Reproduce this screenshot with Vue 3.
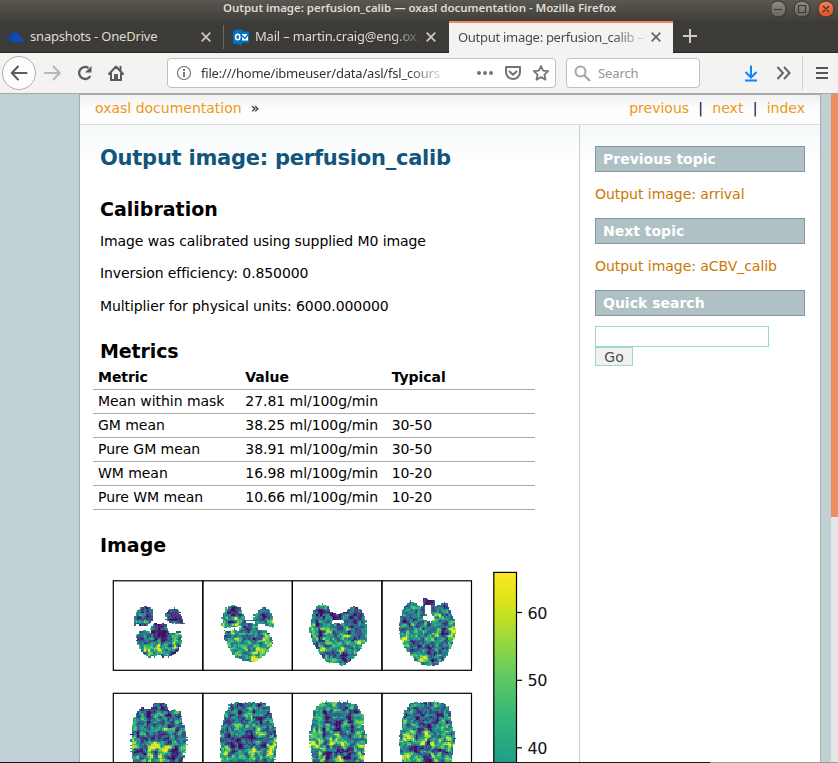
<script setup>
const rows = [
  ['Mean within mask', '27.81 ml/100g/min', ''],
  ['GM mean', '38.25 ml/100g/min', '30-50'],
  ['Pure GM mean', '38.91 ml/100g/min', '30-50'],
  ['WM mean', '16.98 ml/100g/min', '10-20'],
  ['Pure WM mean', '10.66 ml/100g/min', '10-20'],
]

const stops = [
  [68, 1, 84], [72, 40, 120], [62, 74, 137], [49, 104, 142], [38, 130, 142],
  [31, 158, 137], [53, 183, 121], [109, 205, 89], [180, 222, 44], [253, 231, 37],
]
const LEVELS = 20
const viridis = (t) => {
  const p = Math.min(0.9999, Math.max(0, t)) * (stops.length - 1)
  const i = Math.floor(p)
  const f = p - i
  return 'rgb(' + stops[i].map((c, k) => Math.round(c + (stops[i + 1][k] - c) * f)).join(',') + ')'
}

// Outlines are in panel units (268 to a side); blobs are [x, y, rx, ry, value].
const slices = [
  {
    x: 113.3, y: 580.8, base: 0.48,
    shapes: [
      '61,131 62,113 68,92 80,79 96,76 112,79 118,94 118,115 105,130 88,135 73,129',
      '153,108 165,87 178,83 182,78 186,82 196,86 203,106 211,118 211,132 195,130 175,128 163,120',
      '125,123 132,130 145,131 150,123 157,131 164,153 175,158 195,147 205,168 203,193 190,213 170,228 150,228 135,221 125,228 105,230 85,213 72,193 68,168 78,153 93,147 110,152 113,133',
    ],
    holes: [],
    blobs: [[95, 98, 26, 29, 0.2], [183, 104, 32, 30, 0.08], [138, 161, 28, 33, 0], [195, 207, 14, 18, 0.06], [135, 197, 6, 16, 1.2], [182, 196, 6, 13, 1.1], [192, 168, 8, 11, 0.95], [101, 210, 8, 7, 1.1], [66, 117, 6, 7, 0.65]],
  },
  {
    x: 203, y: 580.8, base: 0.6,
    shapes: [
      '56,136 58,113 63,93 76,75 93,71 111,81 123,103 128,120 116,133 96,138 66,143',
      '148,113 166,88 183,80 199,86 209,108 214,142 196,137 176,130 158,133',
      '119,118 148,118 151,127 163,132 165,145 171,147 191,148 206,173 208,188 196,208 181,228 161,238 155,243 141,241 116,238 91,223 76,198 64,168 64,148 76,153 91,145 106,148 115,131',
    ],
    holes: ['129,121 147,121 147,124 129,124'],
    blobs: [[92, 97, 26, 31, 0.16], [183, 105, 26, 28, 0.18], [138, 143, 22, 26, 0.2], [62, 119, 6, 10, 0.95], [211, 121, 5, 14, 1], [101, 119, 10, 10, 0.8], [71, 163, 8, 10, 0.25], [156, 235, 9, 8, 1.15], [101, 206, 12, 9, 0.9], [175, 205, 8, 10, 0.85]],
  },
  {
    x: 292.4, y: 580.8, base: 0.46,
    shapes: ['50,148 58,103 73,75 93,68 108,78 123,96 143,100 163,88 183,75 203,83 218,108 223,143 221,178 203,208 183,233 150,255 128,245 113,251 96,238 73,208 58,178'],
    holes: ['113,125 123,119 148,117 156,124 145,129 135,124 120,130'],
    blobs: [[137, 107, 27, 13, 0.02], [91, 110, 24, 24, 0.15], [184, 110, 22, 25, 0.15], [108, 163, 15, 35, 0.64], [156, 168, 15, 35, 0.64], [183, 160, 12, 32, 0.16], [84, 170, 12, 40, 0.22], [58, 155, 7, 12, 0.95], [91, 206, 8, 9, 1.2], [158, 229, 15, 14, 0], [206, 182, 12, 12, 0.85], [149, 207, 7, 11, 1.1], [117, 236, 10, 7, 1.1]],
  },
  {
    x: 382, y: 580.8, base: 0.48,
    shapes: ['51,143 53,118 61,93 70,74 86,60 103,68 116,82 122,76 121,51 133,48 137,56 158,60 160,75 188,65 198,73 200,88 214,108 221,143 218,168 208,198 193,228 168,250 143,256 118,250 88,228 68,198 53,168'],
    holes: ['128,71 145,71 145,100 155,105 153,118 145,125 126,116 120,106 132,103'],
    blobs: [[140, 63, 20, 15, 0.04], [83, 139, 12, 48, 0.12], [188, 150, 15, 46, 0.1], [65, 177, 11, 18, 1.15], [211, 147, 9, 19, 1.15], [96, 225, 13, 9, 1.15], [55, 120, 7, 10, 0.85], [113, 151, 14, 24, 0.6], [155, 151, 14, 24, 0.65], [145, 217, 12, 25, 0.04], [122, 232, 15, 7, 1.1], [203, 194, 10, 12, 0.95], [101, 195, 12, 15, 0.15], [175, 101, 13, 22, 0.65]],
  },
  {
    x: 113.3, y: 693.3, base: 0.42,
    shapes: ['52,125 55,95 63,70 75,50 90,42 110,47 120,30 155,30 165,53 182,47 200,55 207,90 217,115 220,155 210,190 203,268 68,268 52,170'],
    holes: [],
    blobs: [[138, 36, 18, 9, 0.04], [139, 72, 14, 31, 0.42], [108, 80, 10, 34, 0.16], [168, 81, 10, 34, 0.16], [112, 107, 32, 6, 0.72], [165, 107, 28, 6, 0.72], [138, 133, 25, 12, 0.26], [88, 168, 17, 16, 0], [187, 181, 20, 20, 0], [119, 161, 19, 9, 1.05], [158, 164, 17, 10, 1], [64, 151, 8, 15, 0.9], [208, 163, 9, 15, 1], [109, 192, 8, 17, 1], [145, 190, 7, 22, 0.95], [189, 63, 10, 11, 0.75], [72, 70, 9, 16, 0.5]],
  },
  {
    x: 203, y: 693.3, base: 0.42,
    shapes: ['51,135 53,105 66,65 79,35 96,27 126,28 128,21 131,28 181,28 201,40 206,75 219,115 221,160 206,268 61,268 51,175'],
    holes: [],
    blobs: [[137, 61, 14, 29, 0.65], [111, 64, 11, 32, 0.12], [167, 67, 11, 32, 0.12], [100, 108, 9, 32, 0.68], [173, 110, 9, 32, 0.76], [138, 128, 15, 31, 0.25], [119, 98, 15, 6, 0.68], [154, 98, 15, 6, 0.68], [91, 155, 21, 22, 0.04], [184, 151, 14, 19, 0.06], [65, 177, 10, 22, 0.85], [207, 164, 13, 23, 1.1], [113, 178, 13, 13, 0.8], [152, 181, 10, 16, 1], [136, 205, 6, 20, 0.9], [77, 66, 11, 25, 0.25]],
  },
  {
    x: 292.4, y: 693.3, base: 0.54,
    shapes: ['50,135 56,95 63,55 83,30 100,24 108,22 120,28 138,22 150,26 166,22 168,26 193,35 206,60 215,65 213,95 221,135 215,175 206,268 68,268 55,175'],
    holes: [],
    blobs: [[104, 66, 20, 17, 0.06], [172, 67, 20, 18, 0.06], [138, 94, 11, 22, 0], [137, 52, 9, 20, 0.5], [73, 111, 12, 25, 0.68], [204, 111, 10, 25, 0.65], [101, 119, 8, 32, 0.2], [175, 119, 8, 32, 0.2], [137, 134, 11, 12, 1.1], [120, 151, 12, 7, 0.95], [156, 151, 12, 7, 1], [104, 188, 18, 20, 0.04], [170, 188, 19, 20, 0.04], [66, 154, 14, 9, 0.9], [205, 156, 12, 11, 0.9], [137, 175, 15, 14, 0.06], [85, 178, 6, 28, 0.8], [138, 200, 8, 12, 1]],
  },
  {
    x: 382, y: 693.3, base: 0.52,
    shapes: ['51,145 58,95 66,55 86,30 108,24 110,27 138,27 163,23 186,30 203,45 208,85 220,135 213,180 198,268 70,268 56,185'],
    holes: [],
    blobs: [[104, 69, 21, 19, 0.06], [170, 68, 21, 19, 0.06], [137, 103, 14, 20, -0.04], [111, 113, 8, 32, 0.2], [163, 113, 8, 32, 0.2], [96, 109, 6, 28, 0.68], [180, 109, 7, 28, 0.68], [136, 130, 8, 12, 1.1], [124, 149, 8, 13, 1.05], [149, 149, 8, 13, 1.05], [137, 151, 5, 10, 0], [96, 168, 35, 8, 0], [175, 171, 32, 8, 0], [135, 176, 14, 7, 1.05], [133, 193, 12, 12, 0], [74, 135, 12, 16, 0.82], [197, 147, 13, 18, 0.88], [155, 194, 7, 12, 0.95], [77, 190, 13, 15, 0.8]],
  },
]

const hash = (x, y, s) => {
  let h = Math.imul(x + 101, 374761393) ^ Math.imul(y + 57, 668265263) ^ Math.imul(s + 13, 1442695041)
  h = Math.imul(h ^ (h >>> 13), 1274126177)
  h ^= h >>> 16
  return (h >>> 0) / 4294967295
}
const smooth = (x, y, s) => {
  const i = Math.floor(x)
  const j = Math.floor(y)
  const u = x - i
  const v = y - j
  const top = hash(i, j, s) * (1 - u) + hash(i + 1, j, s) * u
  const bottom = hash(i, j + 1, s) * (1 - u) + hash(i + 1, j + 1, s) * u
  return top * (1 - v) + bottom * v
}
const parse = (s) => s.split(' ').map((p) => p.split(',').map(Number))
const inside = (x, y, poly) => {
  let hit = false
  for (let i = 0, j = poly.length - 1; i < poly.length; j = i++) {
    const [xi, yi] = poly[i]
    const [xj, yj] = poly[j]
    if (yi > y !== yj > y && x < ((xj - xi) * (y - yi)) / (yj - yi) + xi) hit = !hit
  }
  return hit
}

const panels = slices.map((slice, n) => {
  const shapes = slice.shapes.map(parse)
  const holes = slice.holes.map(parse)
  const paths = Array.from({ length: LEVELS }, () => '')
  const cell = 268 / 64
  for (let j = 0; j < 64; j++) {
    for (let i = 0; i < 64; i++) {
      const x = (i + 0.5) * cell
      const y = (j + 0.5) * cell
      const ex = x + (hash(i, j, n + 31) - 0.5) * 4
      const ey = y + (hash(i, j, n + 47) - 0.5) * 4
      if (!shapes.some((s) => inside(ex, ey, s)) || holes.some((s) => inside(x, y, s))) continue
      // The sampling point is warped so that regions get irregular borders.
      const wx = x + (smooth(i / 2.6, j / 2.6, n + 120) - 0.5) * 16
      const wy = y + (smooth(i / 2.6, j / 2.6, n + 140) - 0.5) * 16
      let v = slice.base
      for (const [cx, cy, rx, ry, value] of slice.blobs) {
        const d = ((wx - cx) / rx) ** 2 + ((wy - cy) / ry) ** 2
        v += (value - v) * Math.exp(-d * 0.9) * 0.92
      }
      const noise = (smooth(i / 1.7, j / 1.7, n) - 0.5) * 0.85 + (hash(i, j, n + 80) - 0.5) * 0.22
      v += noise * (v < 0.15 ? 0.35 : 1)
      const level = Math.max(0, Math.min(LEVELS - 1, Math.floor(v * LEVELS)))
      paths[level] += `M${i} ${j}h1v1h-1z`
    }
  }
  return { x: slice.x, y: slice.y, paths: paths.map((d, k) => ({ d, fill: viridis((k + 0.5) / LEVELS) })).filter((p) => p.d) }
})

const ticks = [[60, 612.5], [50, 680.3], [40, 747.8]]
const frames = [113.3, 202.8, 292.4, 382]
</script>

<template>
  <div class="window">
    <header class="titlebar">
      <span class="title">Output image: perfusion_calib — oxasl documentation - Mozilla Firefox</span>
      <svg class="controls" width="66" height="21" viewBox="772 0 66 21">
        <defs>
          <linearGradient id="gray" x1="0" y1="0" x2="0" y2="1"><stop offset="0" stop-color="#8d8b84" /><stop offset="1" stop-color="#65645e" /></linearGradient>
          <linearGradient id="red" x1="0" y1="0" x2="0" y2="1"><stop offset="0" stop-color="#f37f58" /><stop offset="1" stop-color="#e2501f" /></linearGradient>
        </defs>
        <g stroke="#34332e" stroke-width="1">
          <circle cx="778" cy="9" r="8" fill="url(#gray)" /><circle cx="802" cy="9" r="8" fill="url(#gray)" /><circle cx="826" cy="9" r="8" fill="url(#red)" />
        </g>
        <path d="M774 9.5h8M798.5 5.5h7v7h-7zM823 6l6 6m0-6l-6 6" fill="none" stroke="#373630" stroke-width="1.2" />
      </svg>
    </header>

    <nav class="tabs">
      <div class="tab tab-one">
        <svg width="18" height="12" viewBox="0 0 18 12"><path d="M1 10.500Q-1 6 3 5Q4 1 8 1Q11 0 12 3L9 4Q6 4 5 7Q2 8 3 11Z" fill="#0b46b0" /><path d="M5 11Q2.500 8 6 7Q7 3.500 10 4Q12 3 14 7Q17 7 17 10Q17 11 15.500 11Z" fill="#0b4dbb" /></svg>
        <span class="label one">snapshots - OneDrive</span>
        <svg class="close" width="10" height="10" viewBox="0 0 10 10"><path d="M.7.7l8.600 8.600m0-8.600L.7 9.300" /></svg>
      </div>
      <div class="tab tab-two">
        <svg width="16" height="16" viewBox="0 0 16 16"><path d="M8 2.500h8v11H8z" fill="#0072c6" /><path d="M9 5h6v6.500H9z" fill="#fff" /><path d="M9 6.500l3 3L15.500 5" fill="none" stroke="#0072c6" stroke-width="1.400" /><path d="M0 1.600L9 0v16L0 14.400z" fill="#0072c6" /><ellipse cx="4.700" cy="8" rx="2.100" ry="2.800" fill="none" stroke="#fff" stroke-width="1.600" /></svg>
        <span class="label two">Mail – martin.craig@eng.ox.</span>
        <svg class="close" width="10" height="10" viewBox="0 0 10 10"><path d="M.7.7l8.600 8.600m0-8.600L.7 9.300" /></svg>
      </div>
      <div class="tab active">
        <span class="label three">Output image: perfusion_calib –</span>
        <svg class="close dark" width="10" height="10" viewBox="0 0 10 10"><path d="M.7.7l8.600 8.600m0-8.600L.7 9.300" /></svg>
      </div>
      <svg class="plus" width="14" height="14" viewBox="0 0 14 14"><path d="M7 0v14M0 7h14" /></svg>
    </nav>

    <div class="toolbar">
      <svg class="nav-icons" width="130" height="38" viewBox="0 54 130 38" fill="none" stroke="#5b5b5b" stroke-width="2" stroke-linejoin="round">
        <circle cx="19" cy="73" r="16.500" fill="#fdfdfd" stroke="#b0aeab" stroke-width="1" />
        <path d="M12 73h14.500M18 66.500L11.800 73l6.200 6.500" stroke-linecap="round" />
        <path d="M45 73h14.500M53.500 66.500l6.200 6.500-6.200 6.500" stroke="#b8b7b5" stroke-linecap="round" />
        <path d="M90.300 76A6 6 0 1 1 88.500 68" stroke-width="2.300" /><path d="M91.500 66v6.500H85z" fill="#5b5b5b" stroke="none" />
        <path d="M109 74l7-7.500 7 7.500M111 73v7h10v-7" stroke-linecap="round" /><path d="M114.500 80.500v-6h3v6" fill="#5b5b5b" stroke-width="1" /><path d="M120.500 66v5" />
      </svg>
      <div class="url">
        <svg width="16" height="16" viewBox="0 0 16 16"><circle cx="8" cy="8" r="6.500" fill="none" stroke="#777" stroke-width="1.200" /><path d="M7 7h2v5H7zM7 4h2v2H7z" fill="#777" /></svg>
        <span class="address">file:///home/ibmeuser/data/asl/fsl_cours</span>
        <svg class="url-icons" width="76" height="20" viewBox="475 63 76 20" fill="none" stroke="#747474" stroke-width="2" stroke-linejoin="round">
          <g fill="#747474" stroke="none"><circle cx="479" cy="73" r="2" /><circle cx="485" cy="73" r="2" /><circle cx="491" cy="73" r="2" /></g>
          <path d="M506 67h14v5a7 7 0 0 1-14 0z" /><path d="M509.500 71.500l3.500 3.200 3.500-3.200" stroke-linecap="round" />
          <path d="M541 66l2.100 4.700 5.100.5-3.800 3.400 1.100 5.100-4.500-2.600-4.500 2.600 1.100-5.100-3.800-3.400 5.100-.5z" stroke-width="1.800" />
        </svg>
      </div>
      <div class="search">
        <svg width="17" height="17" viewBox="0 0 17 17" fill="none" stroke="#a6a6a6" stroke-width="2"><circle cx="6.500" cy="6.500" r="5" /><path d="M10 10l6 6" stroke-width="2.400" /></svg>
        <span>Search</span>
      </div>
      <svg class="tools" width="94" height="36" viewBox="744 55 94 36" fill="none" stroke="#666" stroke-width="2">
        <path d="M751 65.500V77M745.500 72l5.500 5.500 5.500-5.500M745 80.500h12" stroke="#0a84ff" />
        <path d="M777.500 67l5.500 6-5.500 6M784 67l5.500 6-5.500 6" />
        <path d="M802.500 56v34" stroke="#d5d3d1" stroke-width="1" />
        <path d="M816 68h12M816 73h12M816 78h12" stroke="#555" />
      </svg>
    </div>

    <div class="viewport">
      <div class="document">
        <div class="related">
          <div><a>oxasl documentation</a><span class="raquo">»</span></div>
          <div class="links"><a>previous</a><i>|</i><a>next</a><i>|</i><a>index</a></div>
        </div>
        <div class="columns">
          <main class="body">
            <h1>Output image: perfusion_calib</h1>
            <h2>Calibration</h2>
            <p>Image was calibrated using supplied M0 image</p>
            <p>Inversion efficiency: 0.850000</p>
            <p>Multiplier for physical units: 6000.000000</p>
            <h2 class="metrics">Metrics</h2>
            <table>
              <thead><tr><th>Metric</th><th>Value</th><th>Typical</th></tr></thead>
              <tbody><tr v-for="row in rows" :key="row[0]"><td v-for="(c, i) in row" :key="i">{{ c }}</td></tr></tbody>
            </table>
            <h2 class="image">Image</h2>
            <svg class="figure" width="479" height="198" viewBox="100 565 479 198">
              <defs>
                <linearGradient id="bar" gradientUnits="userSpaceOnUse" x1="0" y1="572" x2="0" y2="763">
                  <stop offset="0" stop-color="#fde725" /><stop offset=".13" stop-color="#e2e41a" /><stop offset=".25" stop-color="#bddf26" /><stop offset=".4" stop-color="#8bd646" /><stop offset=".57" stop-color="#5ac864" /><stop offset=".75" stop-color="#35b779" /><stop offset="1" stop-color="#1f9e89" />
                </linearGradient>
              </defs>
              <g v-for="(p, n) in panels" :key="n" :transform="`translate(${p.x} ${p.y}) scale(1.4)`" shape-rendering="crispEdges">
                <path v-for="(l, k) in p.paths" :key="k" :d="l.d" :fill="l.fill" />
              </g>
              <g fill="none" stroke="#000" stroke-width="1.200">
                <rect v-for="x in frames" :key="x" :x="x" y="580.800" width="89.500" height="89.500" />
                <rect v-for="x in frames" :key="-x" :x="x" y="693.300" width="89.500" height="89.500" />
                <rect x="493.800" y="572.400" width="22.700" height="230" fill="url(#bar)" />
                <path v-for="t in ticks" :key="t[0]" :d="`M517 ${t[1]}h5`" />
              </g>
              <text v-for="t in ticks" :key="t[0]" x="527.500" :y="t[1] + 6">{{ t[0] }}</text>
            </svg>
          </main>
          <aside class="sidebar">
            <h3>Previous topic</h3>
            <a>Output image: arrival</a>
            <h3>Next topic</h3>
            <a>Output image: aCBV_calib</a>
            <h3>Quick search</h3>
            <input type="text" aria-label="Search" />
            <button>Go</button>
          </aside>
        </div>
      </div>
      <div class="scrollbar"><div class="thumb"></div></div>
    </div>
    <div class="edge"></div>
  </div>
</template>

<style>
body { margin: 0; overflow: hidden; }
</style>

<style scoped>
* { box-sizing: border-box; }
.window { position: relative; width: 838px; height: 763px; overflow: hidden; display: flex; flex-direction: column; font-family: "Noto Sans", sans-serif; }
.titlebar { height: 21px; flex: none; display: flex; justify-content: space-between; background: linear-gradient(#59574f, #403f3a); color: #dfdbd2; }
.title { margin-left: 223px; font-size: 11.500px; font-weight: 600; line-height: 16px; white-space: nowrap; letter-spacing: -0.04px; }
.tabs { height: 32px; flex: none; display: flex; background: #3c3b37; border-bottom: 1px solid #282724; color: #dfdbd2; }
.tab { display: flex; align-items: center; font-size: 13px; letter-spacing: -0.19px; white-space: nowrap; }
.tab-one { width: 224px; padding: 0 13px 0 7px; position: relative; }
.tab-one::after { content: ""; position: absolute; right: 0; top: 4px; height: 24px; width: 1px; background: #696862; }
.tab-two { width: 225px; padding: 0 13px 0 9px; }
.active { width: 224px; height: 32px; padding: 0 12px 0 9px; background: #f5f3f2; border-top: 2px solid #f0865b; color: #4a4a4a; }
.label { overflow: hidden; line-height: 20px; margin-top: -2px; }
.one { margin-left: 5px; width: 155px; }
.two { margin-left: 6px; width: 168px; -webkit-mask-image: linear-gradient(90deg, #000 138px, transparent 168px); mask-image: linear-gradient(90deg, #000 138px, transparent 168px); }
.three { width: 192px; letter-spacing: -0.29px; margin-top: -3px; -webkit-mask-image: linear-gradient(90deg, #000 155px, transparent 190px); mask-image: linear-gradient(90deg, #000 155px, transparent 190px); }
.close { margin-left: auto; stroke: #cbc7be; stroke-width: 1.800; flex: none; }
.close.dark { stroke: #666; position: relative; top: -1px; }
.plus { margin: 8px 0 0 10px; stroke: #d0ccc3; stroke-width: 2; }
.toolbar { height: 40px; flex: none; display: flex; align-items: center; background: #f5f3f2; }
.url { width: 389px; height: 30px; margin-left: 37px; display: flex; align-items: center; padding: 0 4px 0 8px; border: 1px solid #c2c0be; border-radius: 4px; background: #fff; }
.address { margin-left: 9px; width: 245px; font-size: 13px; letter-spacing: -0.2px; white-space: nowrap; overflow: hidden; color: #333; -webkit-mask-image: linear-gradient(90deg, #000 205px, transparent 247px); mask-image: linear-gradient(90deg, #000 205px, transparent 247px); }
.url-icons { margin-left: auto; }
.search { width: 134px; height: 30px; margin-left: 10px; display: flex; align-items: center; gap: 7px; padding-left: 7px; border: 1px solid #c2c0be; border-radius: 4px; background: #fff; font-size: 13px; letter-spacing: -0.1px; color: #959595; }
.tools { margin-left: auto; }
.viewport { flex: 1; display: flex; background: #bfd1d4; border-top: 1px solid #aaa8a6; }
.document { width: 742px; margin-left: 79px; border: 1px solid #a6a9a9; border-bottom: 0; background: #fff; display: flex; flex-direction: column; font-family: "DejaVu Sans", sans-serif; font-size: 14px; letter-spacing: -0.09px; }
.related { height: 30px; flex: none; display: flex; justify-content: space-between; padding: 0 15px; line-height: 26px; letter-spacing: 0; border-bottom: 1px solid #d8dddd; background: linear-gradient(#f1f1f1, #fdfdfd 14px); }
.related a { color: #ee9816; }
.raquo { margin-left: 9px; }
.links { display: flex; }
.links i { font-style: normal; color: #000044; margin: 0 9.300px; }
.columns { flex: 1; display: flex; min-height: 0; background: linear-gradient(#f5f9fa, #fff 40px); }
.body { width: 500px; padding: 18px 20px 0; overflow: hidden; border-right: 1px solid #ccc; }
h1, h2, h3, p { margin: 0; white-space: nowrap; }
h1 { font-size: 21px; line-height: 30px; letter-spacing: -0.24px; color: #11557c; }
h2 { font-size: 19px; line-height: 24px; margin-top: 24px; letter-spacing: 0; }
p { line-height: 20px; margin-top: 12.400px; }
h2 + p { margin-top: 10px; }
h2.metrics { margin-top: 23px; letter-spacing: -0.12px; }
table { width: 442px; margin: 3px 0 0 -7px; table-layout: fixed; border-collapse: collapse; }
th, td { height: 24px; padding: 0 5px 2px; text-align: left; line-height: 20px; border-bottom: 1px solid #aaa; white-space: nowrap; letter-spacing: -0.05px; }
th:last-child, td:last-child { padding-left: 4px; }
h2.image { margin-top: 23px; }
.figure { display: block; margin-top: 8px; }
.figure text { font-size: 16px; letter-spacing: -0.4px; fill: #111; }
.sidebar { width: 240px; padding: 21px 15px 0; display: flex; flex-direction: column; align-items: flex-start; }
.sidebar h3 { width: 210px; height: 26px; padding-left: 7px; line-height: 24px; font-size: 14px; color: #fff; border: 1px solid #86989b; background: #afc1c4; letter-spacing: 0; }
.sidebar a { margin: 12px 0 14px; line-height: 20px; letter-spacing: -0.04px; color: #ca7900; }
.sidebar input { width: 174px; height: 21px; margin-top: 10px; border: 1px solid #99d9c5; background: #fff; }
.sidebar button { width: 38px; height: 19px; padding: 0; border: 1px solid #99d9c5; background: #f2f1f0; color: #4c4c4c; font: 14px/16px "DejaVu Sans", sans-serif; }
.scrollbar { width: 7px; margin-left: auto; background: #e6e6e6; }
.thumb { height: 423px; background: #f08c62; }
.edge { position: absolute; left: 0; right: 0; bottom: 0; height: 1px; background: linear-gradient(90deg, #1b1b1b 710px, #999 710px); }
</style>
